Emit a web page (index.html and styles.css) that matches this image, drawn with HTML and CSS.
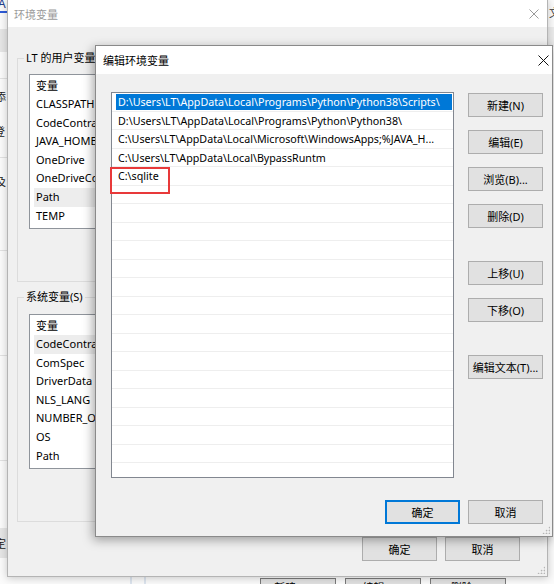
FILE: index.html
```html
<!DOCTYPE html>
<html lang="zh-CN">
<head>
<meta charset="utf-8">
<title>编辑环境变量</title>
<link rel="stylesheet" href="styles.css">
</head>
<body>
<div class="desktop">
  <div class="bg">
    <span class="frag frag-a">A</span>
    <div class="frag band band-1"></div>
    <div class="frag hline hl-1"></div>
    <span class="frag txt t-1">添</span>
    <span class="frag txt t-2">登</span>
    <div class="frag hline hl-2"></div>
    <span class="frag txt t-3">及</span>
    <div class="frag hline hl-3"></div>
    <div class="frag hline hl-4"></div>
    <div class="frag hline hl-5"></div>
    <div class="frag band band-2"><span>定</span></div>
    <span class="frag txt t-r">文</span>
    <div class="frag band band-r"></div>
    <div class="frag vline vl-1"></div>
    <div class="frag vline vl-2"></div>
    <div class="frag bgbtn b-1">新建(W)...</div>
    <div class="frag bgbtn b-2">编辑(I)...</div>
    <div class="frag bgbtn b-3">删除(L)</div>
  </div>

  <section class="win back">
    <header class="titlebar inactive">
      <span class="title">环境变量</span>
      <span class="close close-back"><svg width="10" height="10" viewBox="0 0 10 10"><path d="M0.5 0.5L9.5 9.5M9.5 0.5L0.5 9.5" stroke="#9a9a9a" stroke-width="1"/></svg></span>
    </header>
    <div class="back-body">
      <fieldset class="group group-user">
        <legend>LT 的用户变量(U)</legend>
        <div class="vlist">
          <div class="vrow">变量</div>
          <div class="vrow">CLASSPATH</div>
          <div class="vrow">CodeContracts</div>
          <div class="vrow">JAVA_HOME</div>
          <div class="vrow">OneDrive</div>
          <div class="vrow">OneDriveConsumer</div>
          <div class="vrow hl">Path</div>
          <div class="vrow">TEMP</div>
        </div>
      </fieldset>
      <fieldset class="group group-sys">
        <legend>系统变量(S)</legend>
        <div class="vlist">
          <div class="vrow">变量</div>
          <div class="vrow hl">CodeContracts</div>
          <div class="vrow">ComSpec</div>
          <div class="vrow">DriverData</div>
          <div class="vrow">NLS_LANG</div>
          <div class="vrow">NUMBER_OF_PROCESSORS</div>
          <div class="vrow">OS</div>
          <div class="vrow">Path</div>
        </div>
      </fieldset>
      <div class="footer back-footer">
        <button class="btn">确定</button>
        <button class="btn">取消</button>
      </div>
    </div>
    <span class="grip"></span>
  </section>

  <section class="win front">
    <header class="titlebar">
      <span class="title">编辑环境变量</span>
      <span class="close close-front"><svg width="11" height="11" viewBox="0 0 11 11"><path d="M0.5 0.5L10.5 10.5M10.5 0.5L0.5 10.5" stroke="#111" stroke-width="1"/></svg></span>
    </header>
    <div class="front-body">
      <div class="main">
        <div class="plist">
          <div class="prow sel"><span>D:\Users\LT\AppData\Local\Programs\Python\Python38\Scripts\</span></div>
          <div class="prow"><span>D:\Users\LT\AppData\Local\Programs\Python\Python38\</span></div>
          <div class="prow"><span>C:\Users\LT\AppData\Local\Microsoft\WindowsApps;%JAVA_H...</span></div>
          <div class="prow"><span>C:\Users\LT\AppData\Local\BypassRuntm</span></div>
          <div class="prow marked"><span>C:\sqlite</span><i class="annot"></i></div>
          <div class="prow"></div><div class="prow"></div><div class="prow"></div>
          <div class="prow"></div><div class="prow"></div><div class="prow"></div>
          <div class="prow"></div><div class="prow"></div><div class="prow"></div>
          <div class="prow"></div><div class="prow"></div><div class="prow"></div>
          <div class="prow"></div><div class="prow"></div><div class="prow"></div>
        </div>
        <div class="side">
          <button class="btn">新建(N)</button>
          <button class="btn">编辑(E)</button>
          <button class="btn">浏览(B)...</button>
          <button class="btn">删除(D)</button>
          <button class="btn gap-before">上移(U)</button>
          <button class="btn">下移(O)</button>
          <button class="btn gap-before">编辑文本(T)...</button>
        </div>
      </div>
      <div class="footer front-footer">
        <button class="btn default">确定</button>
        <button class="btn">取消</button>
      </div>
    </div>
    <span class="grip"></span>
  </section>
</div>
</body>
</html>
```

FILE: styles.css
```css
* { box-sizing: border-box; }

html, body {
  margin: 0;
  padding: 0;
}

body {
  width: 554px;
  height: 584px;
  overflow: hidden;
  background: #ffffff;
  font-family: "Noto Sans", "Noto Sans CJK SC", sans-serif;
  font-size: 11px;
  color: #000;
}

.desktop {
  position: relative;
  width: 554px;
  height: 584px;
  overflow: hidden;
}

/* ---------- background window fragments ---------- */
.bg {
  position: absolute;
  inset: 0;
  background: #fbfbfb;
}
.frag { position: absolute; }
.frag-a {
  left: -2px; top: -3px;
  font-size: 12px;
  color: #23408e;
  border-bottom: 2px solid #2e5bd8;
  line-height: 14px;
  width: 9px;
}
.band { background: #e6e6e6; }
.band-1 { left: 0; top: 29px; width: 8px; height: 23px; }
.band-2 { left: 0; top: 528px; width: 8px; height: 30px; }
.band-2 span { position: absolute; left: -5px; top: 7px; font-size: 11px; color: #222; }
.band-r { left: 546px; top: 27px; width: 8px; height: 20px; background: #ececec; }
.hline { left: 0; width: 8px; height: 1px; background: #e2e2e2; }
.hl-1 { top: 78px; }
.hl-2 { top: 157px; }
.hl-3 { top: 250px; }
.hl-4 { top: 355px; }
.hl-5 { top: 460px; }
.txt { font-size: 11px; color: #222; line-height: 14px; }
.t-1 { left: -5px; top: 90px; }
.t-2 { left: -6px; top: 125px; }
.t-3 { left: -5px; top: 175px; }
.t-r { left: 549px; top: 6px; color: #333; }
.vline { top: 570px; width: 2px; height: 14px; background: #dde5ef; }
.vl-1 { left: 130px; }
.vl-2 { left: 144px; }
.bgbtn {
  top: 578px;
  width: 76px;
  height: 22px;
  border: 1px solid #7a7a7a;
  background: #e1e1e1;
  text-align: center;
  line-height: 18px;
  font-size: 11px;
}
.b-1 { left: 260px; }
.b-2 { left: 345px; }
.b-3 { left: 430px; }

/* ---------- windows ---------- */
.win {
  position: absolute;
  background: #f0f0f0;
  display: flex;
  flex-direction: column;
}

.titlebar {
  display: flex;
  align-items: center;
  background: #ffffff;
  flex: none;
}
.titlebar .title { flex: 1; }
.titlebar.inactive { color: #9a9a9a; }
.close {
  display: flex;
  align-items: center;
  justify-content: center;
}

.grip {
  position: absolute;
  right: 2px;
  bottom: 2px;
  width: 8px;
  height: 8px;
  background:
    radial-gradient(circle, #b5b5b5 0.8px, transparent 1.1px) 0 0 / 3px 3px;
  clip-path: polygon(100% 0, 100% 100%, 0 100%);
}

/* back window */
.back {
  left: 7px;
  top: -1px;
  width: 541px;
  height: 578px;
  border: 1px solid #b4b4b4;
  box-shadow: 0 1px 8px rgba(0, 0, 0, 0.22);
}
.back .titlebar {
  height: 27px;
  padding-left: 6px;
}
.close-back { width: 26px; height: 27px; }

.back-body {
  padding: 0 9px;
}

.group {
  margin: 0;
  padding: 0 6px;
  border: 1px solid #dcdcdc;
  min-width: 0;
}
.group legend {
  padding: 0 2px;
  line-height: 14px;
  color: #000;
}
.group-user { margin-top: 24px; padding-bottom: 52px; }
.group-sys { margin-top: 8px; padding-bottom: 52px; }
.group-sys .vlist { margin-top: 10px; }

.vlist {
  margin: 9px 0 0 5px;
  height: 155px;
  background: #fff;
  border: 1px solid #8f949b;
  padding-top: 1.5px;
  overflow: hidden;
}
.vrow {
  height: 18.6px;
  line-height: 18.6px;
  margin-left: 4px;
  padding-left: 2px;
  white-space: nowrap;
}
.vrow.hl { background: #ededed; }

.footer {
  display: flex;
  justify-content: flex-end;
  gap: 8px;
}
.back-footer {
  margin-top: 15px;
  padding-right: 18px;
}

.btn {
  width: 75px;
  height: 24px;
  margin: 0;
  padding: 0;
  border: 1px solid #adadad;
  background: #e1e1e1;
  font: inherit;
  color: #000;
  text-align: center;
  white-space: nowrap;
}
.btn.default {
  border-color: #0078d7;
  box-shadow: inset 0 0 0 1px #0078d7;
}

/* front window */
.front {
  left: 95px;
  top: 45px;
  width: 458px;
  border: 1px solid #8a8a8a;
  box-shadow: -2px 3px 10px rgba(0, 0, 0, 0.35);
}
.front .titlebar {
  height: 28px;
  padding-left: 7px;
}
.close-front { width: 18px; height: 28px; }

.front-body {
  padding: 18px 9px 12px 15px;
}
.main {
  display: grid;
  grid-template-columns: 343px 75px;
  column-gap: 14px;
  align-items: start;
}
.plist {
  height: 386px;
  background: #fff;
  border: 1px solid #828790;
}
.prow {
  position: relative;
  height: 18.5px;
  border-bottom: 1px solid #eeeeee;
  padding: 1px 1px 1px 4px;
  white-space: nowrap;
  font-size: 10.7px;
}
.prow span {
  display: block;
  height: 100%;
  padding-left: 2px;
  line-height: 16px;
  overflow: hidden;
}
.prow.sel span {
  background: #0078d7;
  color: #fff;
}
.annot {
  position: absolute;
  left: -2px;
  top: 0;
  width: 60px;
  height: 27px;
  border: 2px solid #e8393a;
}

.side {
  display: flex;
  flex-direction: column;
  gap: 13px;
  padding-top: 1px;
}
.side .gap-before { margin-top: 20px; }

.front-footer {
  margin-top: 22px;
}
```
